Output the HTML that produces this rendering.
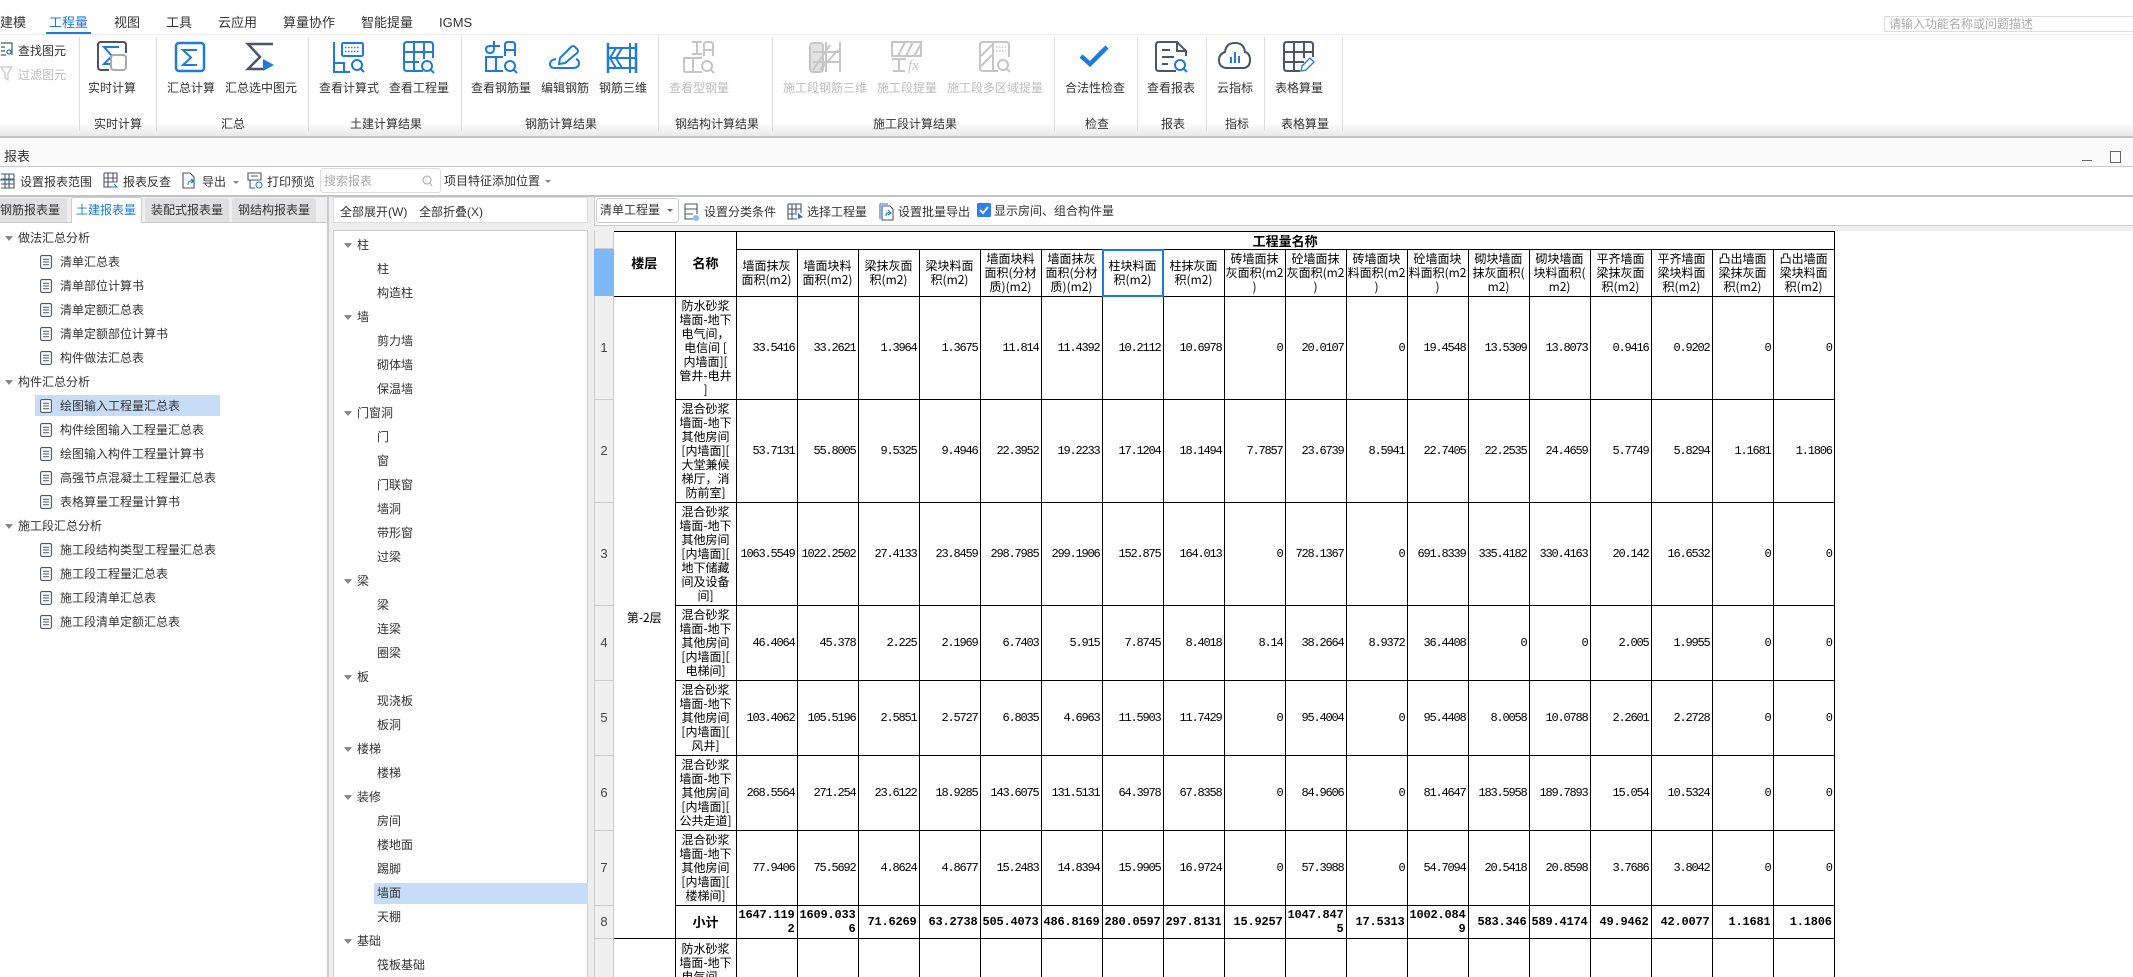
<!DOCTYPE html>
<html lang="zh-CN"><head><meta charset="utf-8"><title>报表</title>
<style>
html,body{margin:0;padding:0;background:#fff}
html{width:2133px;height:977px;overflow:hidden}
body{width:2133px;height:977px;overflow:hidden;position:relative;font:12px/16px "Liberation Sans","Noto Sans CJK SC",sans-serif;color:#333}
.a{position:absolute;white-space:nowrap}
.c{position:absolute;white-space:nowrap;transform:translateX(-50%)}
.g{color:#bdbdbd}
.r{position:absolute;background:#fff}
.t{position:absolute;width:0;height:0;border-left:4px solid transparent;border-right:4px solid transparent;border-top:5px solid #8a8a8a}
.m{font-size:13px;line-height:18px;top:14px;color:#333}
.rh{position:absolute;left:594px;width:20px;background:#f0f0f0;border-bottom:1px solid #ccc;border-left:1px solid #ccc;border-right:1px solid #ccc;box-sizing:border-box;text-align:center;font-size:13px;color:#444;display:flex;align-items:center;justify-content:center}
table{position:absolute;left:614px;top:231px;border-collapse:collapse;table-layout:fixed;width:1220px;font:12px/14px "Liberation Mono","WenQuanYi Zen Hei",monospace;color:#000;background:#fff}
td{border:1px solid #000;padding:0 2px 0 0;text-align:right;vertical-align:middle;overflow:hidden;letter-spacing:-1.2px;white-space:nowrap}
th{border:1px solid #000;padding:0;text-align:center;vertical-align:middle;font-weight:normal;letter-spacing:0;white-space:nowrap;overflow:hidden;font-family:"WenQuanYi Zen Hei","Noto Sans CJK SC",monospace}
th.h{font-weight:bold;font-size:13px;letter-spacing:0}
th.u{padding-bottom:3px}
.f{border-left:0}
tr.b td{font-weight:bold;letter-spacing:-.2px}
tr.e td,tr.e th{border-bottom:0;vertical-align:top}
tr.e div{height:35px;padding-top:3px;overflow:hidden}
svg{position:absolute;overflow:visible}
</style></head><body>
<svg width="0" height="0" style="left:0;top:0"><defs><symbol id="d" viewBox="0 0 12 14"><rect x=".6" y=".6" width="10.8" height="12.8" rx="1.5" fill="#fff" stroke="#4c5566" stroke-width="1.1"/><path d="M3 4.2H9M3 7H9M3 9.8H9" stroke="#4c5566" fill="none"/></symbol></defs></svg>

<!-- top menu -->
<div class="a m" style="left:0">建模</div>
<div class="a m" style="left:49px;color:#1f7ae0">工程量</div>
<div class="r" style="left:46px;top:32px;width:45px;height:2px;background:#1f7ae0"></div>
<div class="a m" style="left:114px">视图</div>
<div class="a m" style="left:166px">工具</div>
<div class="a m" style="left:218px">云应用</div>
<div class="a m" style="left:283px">算量协作</div>
<div class="a m" style="left:361px">智能提量</div>
<div class="a m" style="left:439px">IGMS</div>
<div class="r" style="left:0;top:34px;width:2133px;height:1px;background:#eee"></div>
<div class="a" style="left:1884px;top:16px;width:249px;height:16px;border:1px solid #ddd;border-right:0;border-radius:2px 0 0 2px;box-sizing:border-box;font-size:12px;line-height:14px;color:#aaa;padding-left:4px">请输入功能名称或问题描述</div>

<!-- ribbon -->
<div class="r" style="left:0;top:122px;width:2133px;height:14px;background:linear-gradient(#fff,#e9e9e9)"></div>
<div class="r" style="left:0;top:136px;width:2133px;height:2px;background:#c4c4c4"></div>
<svg width="2133" height="137" style="left:0;top:0" fill="none" stroke-width="2">
<path d="M79.5 37V131M156.5 37V131M308.5 37V131M461.5 37V131M658.5 37V131M772.5 37V131M1054.5 37V131M1137.5 37V131M1206.5 37V131M1264.5 37V131M1342.5 37V131" stroke="#dcdcdc" stroke-width="1"/>
<!-- left small -->
<g stroke="#4c5566" stroke-width="1.2"><path d="M1 43H12V55M1 47H5M1 51H5M1 55H6"/><circle cx="9" cy="52" r="2" stroke="#1f7ae0"/></g>
<path d="M1 67H12L8 73V80L5 78V73Z" stroke="#c6c6c6" stroke-width="1.2"/>
<!-- 实时计算 -->
<path d="M109 70H101Q98 70 98 67V45Q98 42 101 42H123Q126 42 126 45V53" stroke="#4c5566"/>
<path d="M119 47H104L112 56L104 64H110" stroke="#1f7ae0"/>
<rect x="111" y="55" width="15" height="15" rx="3" stroke="#aaa" fill="#fff"/>
<!-- 汇总计算 -->
<rect x="176" y="43" width="28" height="28" rx="3" stroke="#1f7ae0" stroke-width="2.5"/>
<path d="M197 50H183L191 57.5L183 65H197" stroke="#1f7ae0"/>
<!-- 汇总选中 -->
<path d="M273 44H248L260 57L248 69H263" stroke="#4c5566" stroke-width="2.5"/>
<path d="M263 59L274 65L263 71Z" fill="#1f7ae0"/>
<g stroke="#1f7ae0">
<!-- 查看计算式 -->
<path d="M334 42V72H350M334 63H344V72"/>
<rect x="342" y="43" width="21" height="13" rx="1.5"/>
<path d="M345 47.5H360M345 51.5H360" stroke-width="1.5" stroke-dasharray="1.5 1.5"/>
<circle cx="357" cy="65" r="5"/><path d="M360.5 68.5L364 72"/>
<!-- 查看工程量 -->
<path d="M423 71H407Q404 71 404 68V45Q404 42 407 42H430Q433 42 433 45V58"/>
<path d="M414 42V71M424 42V59M404 52H433M404 62H419"/>
<circle cx="427" cy="66" r="5"/><path d="M431 70L434 73"/>
<!-- 查看钢筋量 -->
<path d="M485 57H503M486 57V71H503M496 57V71"/>
<path d="M505 56V45Q505 42 508 42H512Q515 42 515 45V56M505 50H515"/>
<path d="M494 41V48Q494 53 490 53Q486 53 486 49Q486 46 490 46H500"/>
<circle cx="510" cy="66" r="5"/><path d="M514 70L517 73"/>
<!-- 编辑钢筋 -->
<path d="M556 59Q550 60 550 64Q550 68 555 68H573Q579 68 579 63Q579 60 576 59"/>
<path d="M559 64L560 58L571 47Q573 45 575 47L577 49Q579 51 577 53L565 63Z"/>
<!-- 钢筋三维 -->
<path d="M608 43V73M636 43V73" stroke-width="2.5"/>
<path d="M608 48H636M608 58H636M608 68H636M616 48L610 58L616 68M630 43V73M622 48L616 58L622 68"/>
</g>
<g stroke="#c6c6c6">
<!-- 查看型钢量 -->
<path d="M692 42H702M697 42V54M692 54H702"/>
<path d="M684 72V58H702M684 72H702M693 58V72"/>
<path d="M704 56V45Q704 42 707 42H710Q713 42 713 45V56M704 50H713"/>
<circle cx="707" cy="66" r="5"/><path d="M711 70L714 73"/>
<!-- 施工段钢筋三维 -->
<rect x="810" y="43" width="13" height="29" rx="3" fill="#e2e2e2" stroke-width="2"/>
<path d="M826 42V72M840 42V72M813 52H840M813 62H840M813 70L830 45M820 70L838 50"/>
<!-- 施工段提量 -->
<rect x="892" y="42" width="29" height="14"/>
<path d="M898 56L905 42M906 56L913 42M914 56L921 44M892 59H906M899 59V71M893 71H905"/>
<text x="908" y="70" font-family="Liberation Serif" font-style="italic" font-size="15" fill="#c6c6c6" stroke="none">fx</text>
<!-- 多区域 -->
<path d="M998 71H983Q980 71 980 68V45Q980 42 983 42H1006Q1009 42 1009 45V57M993 42V71"/>
<path d="M981 56L992 45M981 66L992 55" />
<path d="M996 47H1006M996 51H1006" stroke-width="1.5" stroke-dasharray="1.5 1.5"/>
<circle cx="1003" cy="65" r="5"/><path d="M1007 69L1010 72"/>
</g>
<!-- 合法性检查 -->
<path d="M1081 56L1090 64L1107 47" stroke="#1f7ae0" stroke-width="4.5"/>
<!-- 查看报表 -->
<path d="M1176 71H1159Q1156 71 1156 68V45Q1156 42 1159 42H1177L1186 51V56M1177 42V51H1186M1162 50H1170M1162 57H1174M1162 64H1168" stroke="#4c5566"/>
<circle cx="1180" cy="65" r="5" stroke="#1f7ae0"/><path d="M1184 69L1187 72" stroke="#1f7ae0"/>
<!-- 云指标 -->
<path d="M1226 68H1244Q1250 67 1250 60Q1250 53 1245 52Q1244 43 1235 43Q1226 43 1225 52Q1219 54 1219 60Q1219 67 1226 68Z" stroke="#4c5566"/>
<path d="M1231 63V57M1235 63V52M1239 63V56" stroke="#1f7ae0"/>
<!-- 表格算量 -->
<path d="M1300 71H1287Q1284 71 1284 68V45Q1284 42 1287 42H1310Q1313 42 1313 45V57M1294 42V71M1304 42V58M1284 52H1313M1284 62H1304" stroke="#4c5566"/>
<path d="M1301 71L1302 66L1310 58L1314 62L1306 70Z" stroke="#1f7ae0" stroke-width="1.3"/>
</svg>
<div class="a" style="left:18px;top:43px">查找图元</div>
<div class="a g" style="left:18px;top:67px">过滤图元</div>
<div class="c" style="left:112px;top:80px">实时计算</div>
<div class="c" style="left:191px;top:80px">汇总计算</div>
<div class="c" style="left:261px;top:80px">汇总选中图元</div>
<div class="c" style="left:349px;top:80px">查看计算式</div>
<div class="c" style="left:419px;top:80px">查看工程量</div>
<div class="c" style="left:501px;top:80px">查看钢筋量</div>
<div class="c" style="left:565px;top:80px">编辑钢筋</div>
<div class="c" style="left:623px;top:80px">钢筋三维</div>
<div class="c g" style="left:699px;top:80px">查看型钢量</div>
<div class="c g" style="left:825px;top:80px">施工段钢筋三维</div>
<div class="c g" style="left:907px;top:80px">施工段提量</div>
<div class="c g" style="left:995px;top:80px">施工段多区域提量</div>
<div class="c" style="left:1095px;top:80px">合法性检查</div>
<div class="c" style="left:1171px;top:80px">查看报表</div>
<div class="c" style="left:1235px;top:80px">云指标</div>
<div class="c" style="left:1299px;top:80px">表格算量</div>
<div class="c" style="left:118px;top:116px">实时计算</div>
<div class="c" style="left:233px;top:116px">汇总</div>
<div class="c" style="left:386px;top:116px">土建计算结果</div>
<div class="c" style="left:561px;top:116px">钢筋计算结果</div>
<div class="c" style="left:717px;top:116px">钢结构计算结果</div>
<div class="c" style="left:915px;top:116px">施工段计算结果</div>
<div class="c" style="left:1097px;top:116px">检查</div>
<div class="c" style="left:1173px;top:116px">报表</div>
<div class="c" style="left:1237px;top:116px">指标</div>
<div class="c" style="left:1305px;top:116px">表格算量</div>

<!-- title bar -->
<div class="r" style="left:0;top:138px;width:2133px;height:28px;background:#fafafa"></div>
<div class="a" style="left:4px;top:149px;font-size:13px">报表</div>
<div class="r" style="left:2082px;top:160px;width:10px;height:1px;background:#666"></div>
<div class="r" style="left:2110px;top:151px;width:9px;height:10px;border:1px solid #666;background:none"></div>
<div class="r" style="left:0;top:166px;width:2133px;height:1px;background:#c8c8cc"></div>

<!-- toolbar -->
<div class="r" style="left:0;top:195px;width:2133px;height:2px;background:#c0c4c8"></div>
<div class="a" style="left:320px;top:168px;width:121px;height:25px;border:1px solid #ddd;border-radius:3px;box-sizing:border-box;padding:4px 0 0 3px;color:#aaa">搜索报表</div>
<svg width="600" height="30" style="left:0;top:167px" fill="none" stroke="#4c5566" stroke-width="1.1">
<path d="M1 7H13Q14 7 14 8V21H1M5 7V21M9 7V21M1 12H14M1 17H14"/><path d="M0 13H14" stroke="#1f7ae0"/>
<path d="M104 6H117V15M104 6V20H112M108 6V20M113 6V15M104 11H117M104 15H117"/><path d="M114 17L117 20L112 20" stroke="#1f7ae0"/>
<path d="M183 21V6H190L194 10V21Z"/><path d="M188 18Q188 13 193 14M191 12L194 14L191 16" stroke="#1f7ae0"/>
<path d="M248 6H261V13H248ZM250 13V21H255M251 9H258"/><circle cx="259" cy="18" r="3" stroke="#1f7ae0"/>
<circle cx="427" cy="13" r="4" stroke="#aaa"/><path d="M430 16L432 19" stroke="#aaa"/>
</svg>
<div class="t" style="left:233px;top:181px;border-width:3px 3px 0 3px;border-top-color:#888"></div>
<div class="t" style="left:545px;top:180px;border-width:3px 3px 0 3px;border-top-color:#888"></div>
<div class="a" style="left:20px;top:174px">设置报表范围</div>
<div class="a" style="left:123px;top:174px">报表反查</div>
<div class="a" style="left:202px;top:174px">导出</div>
<div class="a" style="left:267px;top:174px">打印预览</div>
<div class="a" style="left:444px;top:173px">项目特征添加位置</div>

<!-- panels base -->
<div class="r" style="left:0;top:197px;width:594px;height:780px;background:#eee"></div>
<div class="r" style="left:0;top:222px;width:327px;height:755px"></div>
<div class="r" style="left:327px;top:197px;width:2px;height:780px;background:#ccc"></div>
<div class="r" style="left:0;top:222px;width:327px;height:1px;background:#ccc"></div>
<div class="r" style="left:0;top:198px;width:67px;height:24px;background:#e0e0e0;border-radius:0 3px 0 0"></div>
<div class="r" style="left:71px;top:197px;width:71px;height:26px;border:1px solid #ccc;border-bottom:0;border-radius:3px 3px 0 0;box-sizing:border-box"></div>
<div class="r" style="left:145px;top:198px;width:84px;height:24px;background:#e0e0e0;border-radius:3px 3px 0 0"></div>
<div class="r" style="left:232px;top:198px;width:84px;height:24px;background:#e0e0e0;border-radius:3px 3px 0 0"></div>
<div class="a" style="left:0;top:202px">钢筋报表量</div>
<div class="a" style="left:76px;top:202px;color:#1f7ae0">土建报表量</div>
<div class="a" style="left:151px;top:202px">装配式报表量</div>
<div class="a" style="left:238px;top:202px">钢结构报表量</div>
<div class="r" style="left:333px;top:197px;width:255px;height:26px;border:1px solid #ddd;box-sizing:border-box"></div>
<div class="a" style="left:340px;top:204px">全部展开(W)</div>
<div class="a" style="left:419px;top:204px">全部折叠(X)</div>
<div class="r" style="left:333px;top:230px;width:255px;height:747px;border-left:1px solid #ccc;border-right:1px solid #ccc;border-top:1px solid #ccc;box-sizing:border-box"></div>

<!-- left tree -->
<div class="r" style="left:35px;top:395px;width:185px;height:21px;background:#c6dcf7"></div>
<div class="t" style="left:5px;top:236px"></div><div class="a" style="left:18px;top:230px">做法汇总分析</div>
<svg width="12" height="14" style="left:40px;top:255px"><use href="#d"/></svg><div class="a" style="left:60px;top:254px">清单汇总表</div>
<svg width="12" height="14" style="left:40px;top:279px"><use href="#d"/></svg><div class="a" style="left:60px;top:278px">清单部位计算书</div>
<svg width="12" height="14" style="left:40px;top:303px"><use href="#d"/></svg><div class="a" style="left:60px;top:302px">清单定额汇总表</div>
<svg width="12" height="14" style="left:40px;top:327px"><use href="#d"/></svg><div class="a" style="left:60px;top:326px">清单定额部位计算书</div>
<svg width="12" height="14" style="left:40px;top:351px"><use href="#d"/></svg><div class="a" style="left:60px;top:350px">构件做法汇总表</div>
<div class="t" style="left:5px;top:380px"></div><div class="a" style="left:18px;top:374px">构件汇总分析</div>
<svg width="12" height="14" style="left:40px;top:399px"><use href="#d"/></svg><div class="a" style="left:60px;top:398px">绘图输入工程量汇总表</div>
<svg width="12" height="14" style="left:40px;top:423px"><use href="#d"/></svg><div class="a" style="left:60px;top:422px">构件绘图输入工程量汇总表</div>
<svg width="12" height="14" style="left:40px;top:447px"><use href="#d"/></svg><div class="a" style="left:60px;top:446px">绘图输入构件工程量计算书</div>
<svg width="12" height="14" style="left:40px;top:471px"><use href="#d"/></svg><div class="a" style="left:60px;top:470px">高强节点混凝土工程量汇总表</div>
<svg width="12" height="14" style="left:40px;top:495px"><use href="#d"/></svg><div class="a" style="left:60px;top:494px">表格算量工程量计算书</div>
<div class="t" style="left:5px;top:524px"></div><div class="a" style="left:18px;top:518px">施工段汇总分析</div>
<svg width="12" height="14" style="left:40px;top:543px"><use href="#d"/></svg><div class="a" style="left:60px;top:542px">施工段结构类型工程量汇总表</div>
<svg width="12" height="14" style="left:40px;top:567px"><use href="#d"/></svg><div class="a" style="left:60px;top:566px">施工段工程量汇总表</div>
<svg width="12" height="14" style="left:40px;top:591px"><use href="#d"/></svg><div class="a" style="left:60px;top:590px">施工段清单汇总表</div>
<svg width="12" height="14" style="left:40px;top:615px"><use href="#d"/></svg><div class="a" style="left:60px;top:614px">施工段清单定额汇总表</div>

<!-- middle tree -->
<div class="r" style="left:374px;top:883px;width:214px;height:21px;background:#c6dcf7"></div>
<div class="t" style="left:344px;top:243px"></div><div class="a" style="left:357px;top:237px">柱</div>
<div class="a" style="left:377px;top:261px">柱</div>
<div class="a" style="left:377px;top:285px">构造柱</div>
<div class="t" style="left:344px;top:315px"></div><div class="a" style="left:357px;top:309px">墙</div>
<div class="a" style="left:377px;top:333px">剪力墙</div>
<div class="a" style="left:377px;top:357px">砌体墙</div>
<div class="a" style="left:377px;top:381px">保温墙</div>
<div class="t" style="left:344px;top:411px"></div><div class="a" style="left:357px;top:405px">门窗洞</div>
<div class="a" style="left:377px;top:429px">门</div>
<div class="a" style="left:377px;top:453px">窗</div>
<div class="a" style="left:377px;top:477px">门联窗</div>
<div class="a" style="left:377px;top:501px">墙洞</div>
<div class="a" style="left:377px;top:525px">带形窗</div>
<div class="a" style="left:377px;top:549px">过梁</div>
<div class="t" style="left:344px;top:579px"></div><div class="a" style="left:357px;top:573px">梁</div>
<div class="a" style="left:377px;top:597px">梁</div>
<div class="a" style="left:377px;top:621px">连梁</div>
<div class="a" style="left:377px;top:645px">圈梁</div>
<div class="t" style="left:344px;top:675px"></div><div class="a" style="left:357px;top:669px">板</div>
<div class="a" style="left:377px;top:693px">现浇板</div>
<div class="a" style="left:377px;top:717px">板洞</div>
<div class="t" style="left:344px;top:747px"></div><div class="a" style="left:357px;top:741px">楼梯</div>
<div class="a" style="left:377px;top:765px">楼梯</div>
<div class="t" style="left:344px;top:795px"></div><div class="a" style="left:357px;top:789px">装修</div>
<div class="a" style="left:377px;top:813px">房间</div>
<div class="a" style="left:377px;top:837px">楼地面</div>
<div class="a" style="left:377px;top:861px">踢脚</div>
<div class="a" style="left:377px;top:885px">墙面</div>
<div class="a" style="left:377px;top:909px">天棚</div>
<div class="t" style="left:344px;top:939px"></div><div class="a" style="left:357px;top:933px">基础</div>
<div class="a" style="left:377px;top:957px">筏板基础</div>

<!-- right toolbar -->
<div class="r" style="left:594px;top:225px;width:1539px;height:1px;background:#ccc"></div>
<div class="r" style="left:594px;top:226px;width:1539px;height:5px;background:#f0f0f0"></div>
<div class="r" style="left:594px;top:197px;width:1px;height:29px;background:#ccc"></div>
<div class="a" style="left:596px;top:198px;width:83px;height:25px;border:1px solid #ccc;border-radius:3px;box-sizing:border-box;padding:3px 0 0 3px">清单工程量</div>
<div class="t" style="left:667px;top:209px;border-width:3px 3px 0 3px;border-top-color:#666"></div>
<svg width="320" height="28" style="left:680px;top:198px" fill="none" stroke="#4c5566" stroke-width="1.1">
<path d="M5 6H17V16M5 6V21H13M5 11H17M5 16H13"/><circle cx="16" cy="20" r="3" fill="#8cbcf0" stroke="none"/>
<path d="M108 6H121V15M108 6V21H117M112 6V21M116 6V15M108 11H121M108 16H117"/><path d="M118 15L123 19L118 21Z" fill="#1f7ae0" stroke="none"/>
<path d="M200 21V6H208" stroke="#1f7ae0"/><path d="M202 22V8H210L213 11V22Z"/><path d="M206 18Q206 14 210 15M208 12L211 15L208 17" stroke="#1f7ae0"/>
</svg>
<div class="a" style="left:704px;top:204px">设置分类条件</div>
<div class="a" style="left:807px;top:204px">选择工程量</div>
<div class="a" style="left:898px;top:204px">设置批量导出</div>
<svg width="14" height="14" style="left:977px;top:203px"><rect width="14" height="14" rx="1.5" fill="#2f80e8"/><path d="M3 7L6 10L11 4" fill="none" stroke="#fff" stroke-width="1.8"/></svg>
<div class="a" style="left:994px;top:203px">显示房间、组合构件量</div>

<!-- row headers -->
<div class="rh" style="top:231px;height:18px"></div>
<div class="rh" style="top:249px;height:47px;background:#7fb8f8;border-color:#7fb8f8"></div>
<div class="rh" style="top:296px;height:104px">1</div>
<div class="rh" style="top:400px;height:103px">2</div>
<div class="rh" style="top:503px;height:103px">3</div>
<div class="rh" style="top:606px;height:75px">4</div>
<div class="rh" style="top:681px;height:75px">5</div>
<div class="rh" style="top:756px;height:75px">6</div>
<div class="rh" style="top:831px;height:75px">7</div>
<div class="rh" style="top:906px;height:33px">8</div>
<div class="rh" style="top:939px;height:38px;border-bottom:0"></div>

<table>
<colgroup><col style="width:61px"><col style="width:61px"><col span="18" style="width:61px"></colgroup>
<tr style="height:18px"><th class="h f u" rowspan="2">楼层</th><th class="h u" rowspan="2">名称</th><th class="h" colspan="18">工程量名称</th></tr>
<tr style="height:47px">
<th>墙面抹灰<br>面积(m2)</th><th>墙面块料<br>面积(m2)</th><th>梁抹灰面<br>积(m2)</th><th>梁块料面<br>积(m2)</th><th>墙面块料<br>面积(分材<br>质)(m2)</th><th>墙面抹灰<br>面积(分材<br>质)(m2)</th><th>柱块料面<br>积(m2)</th><th>柱抹灰面<br>积(m2)</th><th>砖墙面抹<br>灰面积(m2<br>)</th><th>砼墙面抹<br>灰面积(m2<br>)</th><th>砖墙面块<br>料面积(m2<br>)</th><th>砼墙面块<br>料面积(m2<br>)</th><th>砌块墙面<br>抹灰面积(<br>m2)</th><th>砌块墙面<br>块料面积(<br>m2)</th><th>平齐墙面<br>梁抹灰面<br>积(m2)</th><th>平齐墙面<br>梁块料面<br>积(m2)</th><th>凸出墙面<br>梁抹灰面<br>积(m2)</th><th>凸出墙面<br>梁块料面<br>积(m2)</th></tr>
<tr style="height:103px"><th class="f" rowspan="8">第-2层</th><th>防水砂浆<br>墙面-地下<br>电气间，<br>电信间 [<br>内墙面][<br>管井-电井<br>]</th><td>33.5416</td><td>33.2621</td><td>1.3964</td><td>1.3675</td><td>11.814</td><td>11.4392</td><td>10.2112</td><td>10.6978</td><td>0</td><td>20.0107</td><td>0</td><td>19.4548</td><td>13.5309</td><td>13.8073</td><td>0.9416</td><td>0.9202</td><td>0</td><td>0</td></tr>
<tr style="height:103px"><th>混合砂浆<br>墙面-地下<br>其他房间<br>[内墙面][<br>大堂兼候<br>梯厅，消<br>防前室]</th><td>53.7131</td><td>55.8005</td><td>9.5325</td><td>9.4946</td><td>22.3952</td><td>19.2233</td><td>17.1204</td><td>18.1494</td><td>7.7857</td><td>23.6739</td><td>8.5941</td><td>22.7405</td><td>22.2535</td><td>24.4659</td><td>5.7749</td><td>5.8294</td><td>1.1681</td><td>1.1806</td></tr>
<tr style="height:103px"><th>混合砂浆<br>墙面-地下<br>其他房间<br>[内墙面][<br>地下储藏<br>间及设备<br>间]</th><td>1063.5549</td><td>1022.2502</td><td>27.4133</td><td>23.8459</td><td>298.7985</td><td>299.1906</td><td>152.875</td><td>164.013</td><td>0</td><td>728.1367</td><td>0</td><td>691.8339</td><td>335.4182</td><td>330.4163</td><td>20.142</td><td>16.6532</td><td>0</td><td>0</td></tr>
<tr style="height:75px"><th>混合砂浆<br>墙面-地下<br>其他房间<br>[内墙面][<br>电梯间]</th><td>46.4064</td><td>45.378</td><td>2.225</td><td>2.1969</td><td>6.7403</td><td>5.915</td><td>7.8745</td><td>8.4018</td><td>8.14</td><td>38.2664</td><td>8.9372</td><td>36.4408</td><td>0</td><td>0</td><td>2.005</td><td>1.9955</td><td>0</td><td>0</td></tr>
<tr style="height:75px"><th>混合砂浆<br>墙面-地下<br>其他房间<br>[内墙面][<br>风井]</th><td>103.4062</td><td>105.5196</td><td>2.5851</td><td>2.5727</td><td>6.8035</td><td>4.6963</td><td>11.5903</td><td>11.7429</td><td>0</td><td>95.4004</td><td>0</td><td>95.4408</td><td>8.0058</td><td>10.0788</td><td>2.2601</td><td>2.2728</td><td>0</td><td>0</td></tr>
<tr style="height:75px"><th>混合砂浆<br>墙面-地下<br>其他房间<br>[内墙面][<br>公共走道]</th><td>268.5564</td><td>271.254</td><td>23.6122</td><td>18.9285</td><td>143.6075</td><td>131.5131</td><td>64.3978</td><td>67.8358</td><td>0</td><td>84.9606</td><td>0</td><td>81.4647</td><td>183.5958</td><td>189.7893</td><td>15.054</td><td>10.5324</td><td>0</td><td>0</td></tr>
<tr style="height:75px"><th>混合砂浆<br>墙面-地下<br>其他房间<br>[内墙面][<br>楼梯间]</th><td>77.9406</td><td>75.5692</td><td>4.8624</td><td>4.8677</td><td>15.2483</td><td>14.8394</td><td>15.9905</td><td>16.9724</td><td>0</td><td>57.3988</td><td>0</td><td>54.7094</td><td>20.5418</td><td>20.8598</td><td>3.7686</td><td>3.8042</td><td>0</td><td>0</td></tr>
<tr class="b" style="height:33px"><th class="h">小计</th><td>1647.119<br>2</td><td>1609.033<br>6</td><td>71.6269</td><td>63.2738</td><td>505.4073</td><td>486.8169</td><td>280.0597</td><td>297.8131</td><td>15.9257</td><td>1047.847<br>5</td><td>17.5313</td><td>1002.084<br>9</td><td>583.346</td><td>589.4174</td><td>49.9462</td><td>42.0077</td><td>1.1681</td><td>1.1806</td></tr>
<tr class="e" style="height:38px"><th class="f"></th><th><div>防水砂浆<br>墙面-地下<br>电气间，</div></th><td></td><td></td><td></td><td></td><td></td><td></td><td></td><td></td><td></td><td></td><td></td><td></td><td></td><td></td><td></td><td></td><td></td><td></td></tr>
</table>
<div class="r" style="left:1102px;top:249px;width:62px;height:48px;border:2px solid #1f7ae0;box-sizing:border-box;background:none"></div>
</body></html>
